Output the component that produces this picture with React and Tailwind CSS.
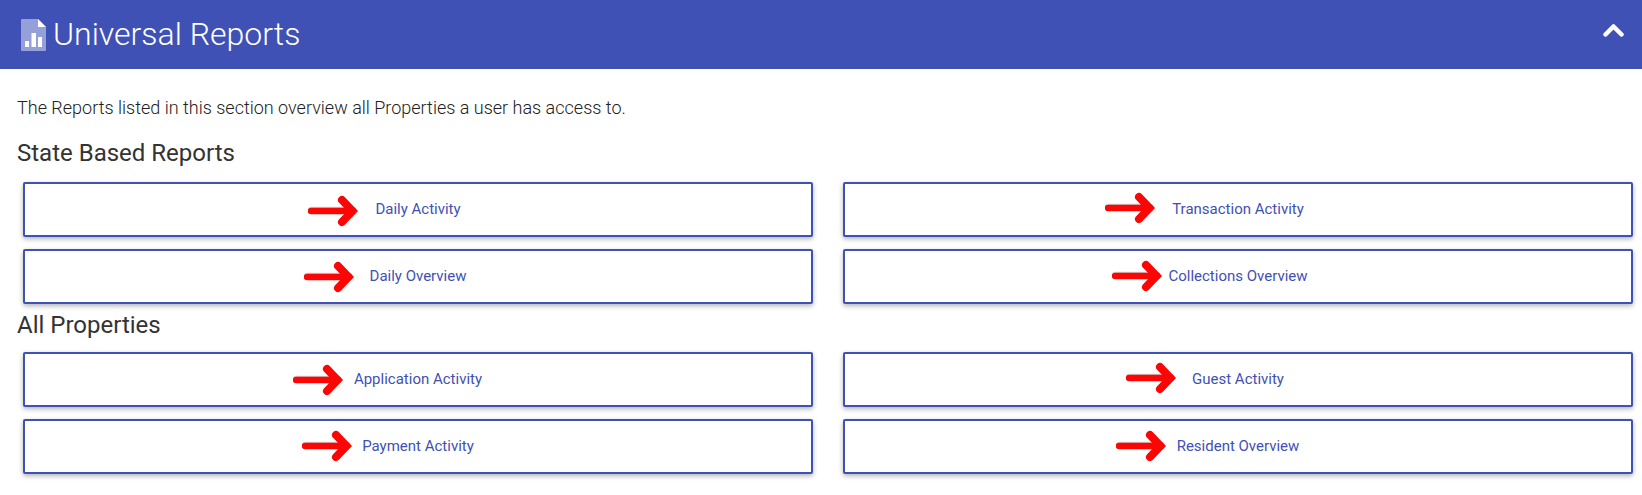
const FONT = "font-['Roboto',sans-serif]";

function Arrow({ className }) {
  return (
    <svg className={`absolute w-[54px] h-[32px] ${className}`} viewBox="0 0 54 32" fill="none" aria-hidden="true">
      <path d="M3 15H45" stroke="#b9b0b0" strokeWidth="6.5" strokeLinecap="round" opacity="0.6" />
      <path d="M3 16H45" stroke="#fb0505" strokeWidth="6.5" strokeLinecap="round" />
      <path d="M34 5L44.5 16L34 27" stroke="#fb0505" strokeWidth="8" strokeLinecap="round" strokeLinejoin="miter" />
    </svg>
  );
}

function ReportButton({ label, arrow }) {
  return (
    <button className="relative flex h-[55px] items-center justify-center rounded-[2px] border-2 border-[#3f51b5] bg-white text-[15px] text-[#3f51b5] shadow-[0_2px_5px_rgba(0,0,0,0.3)]">
      <Arrow className={arrow} />
      {label}
    </button>
  );
}

function Row({ children }) {
  return <div className="grid grid-cols-2 gap-x-[30px] gap-y-[12px] pl-[23px] pr-[9px]">{children}</div>;
}

export default function App() {
  return (
    <div className={`${FONT} h-[495px] bg-white text-[#333]`}>
      <header className="flex h-[69px] items-center justify-between bg-[#3f51b5] pl-[21px] pr-[18px] text-white">
        <div className="flex items-center gap-[7px]">
          <svg className="h-[32px] w-[25px]" viewBox="0 0 25 32" aria-hidden="true">
            <path d="M1 0H17L25 8V31a1 1 0 0 1-1 1H1a1 1 0 0 1-1-1V1a1 1 0 0 1 1-1Z" fill="#959fd8" />
            <path d="M17 0L25 8H17Z" fill="#fff" />
            <path d="M4 22h4v6H4zM10.5 14h4.5v14h-4.5zM17 18h4v10h-4z" fill="#fff" />
          </svg>
          <h1 className="mb-[2px] text-[32px] font-light leading-none">Universal Reports</h1>
        </div>
        <svg className="mb-[9px] h-[14px] w-[21px]" viewBox="0 0 21 14" fill="none" aria-hidden="true">
          <path d="M2.5 11.5L10.5 3.5L18.5 11.5" stroke="#fff" strokeWidth="4.5" strokeLinecap="round" strokeLinejoin="round" />
        </svg>
      </header>
      <p className="pl-[17px] pt-[27px] text-[18px] font-light leading-[24px] text-[#212121]">The Reports listed in this section overview all Properties a user has access to.</p>
      <h2 className="pl-[17px] pt-[19px] pb-[15px] text-[24px] leading-[28px]">State Based Reports</h2>
      <Row>
        <ReportButton label="Daily Activity" arrow="left-[283px] top-[11px]" />
        <ReportButton label="Transaction Activity" arrow="left-[260px] top-[8px]" />
        <ReportButton label="Daily Overview" arrow="left-[279px] top-[10px]" />
        <ReportButton label="Collections Overview" arrow="left-[267px] top-[9px]" />
      </Row>
      <h2 className="pl-[17px] pt-[7px] pb-[13px] text-[24px] leading-[28px]">All Properties</h2>
      <Row>
        <ReportButton label="Application Activity" arrow="left-[268px] top-[10px]" />
        <ReportButton label="Guest Activity" arrow="left-[281px] top-[8px]" />
        <ReportButton label="Payment Activity" arrow="left-[277px] top-[9px]" />
        <ReportButton label="Resident Overview" arrow="left-[271px] top-[9px]" />
      </Row>
    </div>
  );
}
